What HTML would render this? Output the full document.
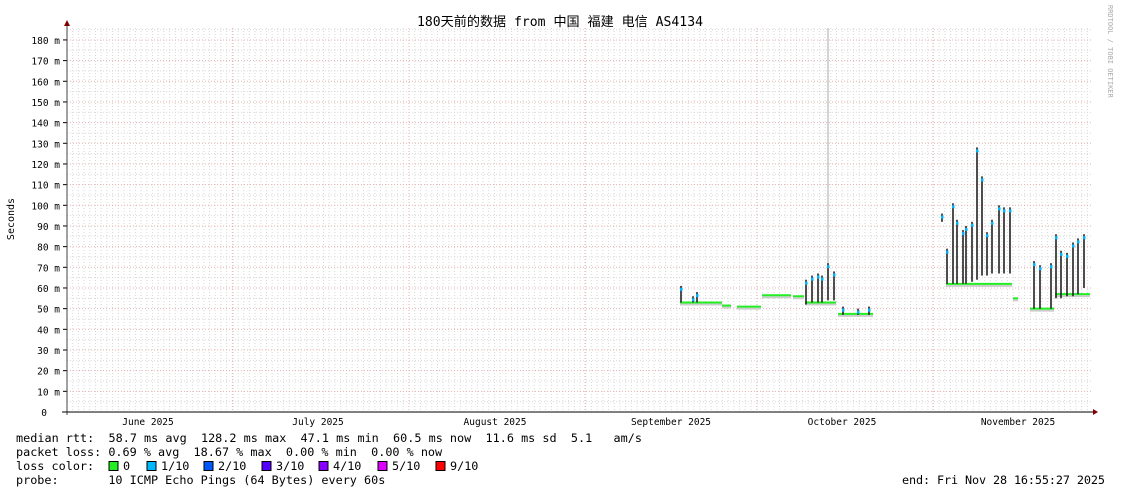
<!DOCTYPE html><html><head><meta charset="utf-8"><style>
body{margin:0;background:#fff;width:1121px;height:494px;overflow:hidden}
svg{display:block;font-family:"DejaVu Sans Mono","Liberation Mono","Noto Sans CJK SC",monospace}
.pre{white-space:pre}
</style></head><body>
<svg id="s" width="1121" height="494" xmlns="http://www.w3.org/2000/svg">
<text x="560" y="26" font-size="13.1" text-anchor="middle" font-family="DejaVu Sans Mono,Noto Sans CJK SC,monospace">180天前的数据 from 中国 福建 电信 AS4134</text>
<text transform="translate(1108,5) rotate(90)" font-size="7" fill="#aaa">RRDTOOL / TOBI OETIKER</text>
<text transform="translate(14,219) rotate(-90)" font-size="10" text-anchor="middle">Seconds</text>
<g id="grid"></g><g id="data"></g>
<line x1="67" y1="24" x2="67" y2="415" stroke="#444"/>
<line x1="62" y1="412" x2="1095" y2="412" stroke="#000"/>
<path d="M64,26 L70,26 L67,20Z" fill="#800000"/>
<path d="M1093,409 L1093,415 L1098,412Z" fill="#800000"/>
<g font-size="9.5" text-anchor="middle">
<text x="148" y="425">June 2025</text><text x="318" y="425">July 2025</text><text x="495" y="425">August 2025</text><text x="671" y="425">September 2025</text><text x="842" y="425">October 2025</text><text x="1018" y="425">November 2025</text></g>
<g font-size="11.8" class="pre">
<text x="16" y="442" class="pre" textLength="626">median rtt:  58.7 ms avg  128.2 ms max  47.1 ms min  60.5 ms now  11.6 ms sd  5.1   am/s</text>
<text x="16" y="456" class="pre">packet loss: 0.69 % avg  18.67 % max  0.00 % min  0.00 % now</text>
<text x="16" y="470" class="pre">loss color:</text>
<text x="16" y="484" class="pre">probe:       10 ICMP Echo Pings (64 Bytes) every 60s</text>
<text x="902" y="484" class="pre" textLength="203">end: Fri Nov 28 16:55:27 2025</text>
</g>
<g font-size="11.8" id="leg"></g>
</svg>
<script>
var ns="http://www.w3.org/2000/svg",g=document.getElementById('grid'),d=document.getElementById('data'),L=document.getElementById('leg');
function el(p,t,a,tx){var e=document.createElementNS(ns,t);for(var k in a)e.setAttribute(k,a[k]);if(tx)e.textContent=tx;p.appendChild(e);return e}
function Y(v){return 412-v*2.067}
for(var x=67+5.7;x<1093;x+=5.7)el(g,'line',{x1:x,y1:28,x2:x,y2:412,stroke:'#d8d8d8','stroke-dasharray':'1,2'});
for(var v=5;v<=185;v+=5)el(g,'line',{x1:67,y1:Y(v),x2:1093,y2:Y(v),stroke:v%10?'#d8d8d8':'#eab0b0','stroke-dasharray':'1,2'});
[233,409,585,757,933].forEach(function(x){el(g,'line',{x1:x,y1:28,x2:x,y2:412,stroke:'#eab0b0','stroke-dasharray':'1,2'})});
for(var v=0;v<=180;v+=10){el(g,'line',{x1:63,y1:Y(v),x2:67,y2:Y(v),stroke:'#000'});el(g,'text',{x:v?60:47,y:Y(v)+4,'font-size':'9.5','text-anchor':'end'},v?v+' m':'0')}
el(d,'line',{x1:828,y1:28,x2:828,y2:300,stroke:'#aaa'});
var segs=[[680,722,53],[722,731,51.5],[737,761,51],[762,791,56.5],[793,804,56],[805,836,53],[838,873,47.5],[946,1012,62],[1013,1018,55],[1030,1054,50],[1055,1090,57]];
segs.forEach(function(s){el(d,'line',{x1:s[0],y1:Y(s[2])+2,x2:s[1],y2:Y(s[2])+2,stroke:'#ccc','stroke-width':2});el(d,'line',{x1:s[0],y1:Y(s[2]),x2:s[1],y2:Y(s[2]),stroke:'#22ee22','stroke-width':2})});
var sp=[[681,53,61],[693,53,56],[697,53,58],[806,52,64],[812,53,66],[818,53,67],[822,53,66],[828,54,72],[834,54,68],[843,47,51],[858,47,50],[869,47,51],[942,92,96],[947,62,79],[953,62,101],[957,62,93],[963,62,88],[966,62,90],[972,63,92],[977,64,128],[982,66,114],[987,66,87],[992,67,93],[999,67,100],[1004,67,99],[1010,67,99],[1034,50,73],[1040,50,71],[1051,50,72],[1056,55,86],[1061,55,78],[1067,56,77],[1073,56,82],[1078,57,84],[1084,60,86]];
sp.forEach(function(s){el(d,'line',{x1:s[0],y1:Y(s[1]),x2:s[0],y2:Y(s[2]),stroke:'#222','stroke-width':1.6});el(d,'rect',{x:s[0]-1,y:Y(s[2])+2,width:2.5,height:3,fill:'#00b8ff'})});
var c=[['#22ee22','0',109],['#00b8ff','1/10',147],['#0059ff','2/10',204],['#5500ff','3/10',262],['#8800ff','4/10',319],['#dd00ff','5/10',378],['#ff0000','9/10',436]];
c.forEach(function(a){el(L,'rect',{x:a[2],y:461.5,width:9,height:9,fill:a[0],stroke:'#000'});el(L,'text',{x:a[2]+14,y:470},a[1])});
</script>
</body></html>
